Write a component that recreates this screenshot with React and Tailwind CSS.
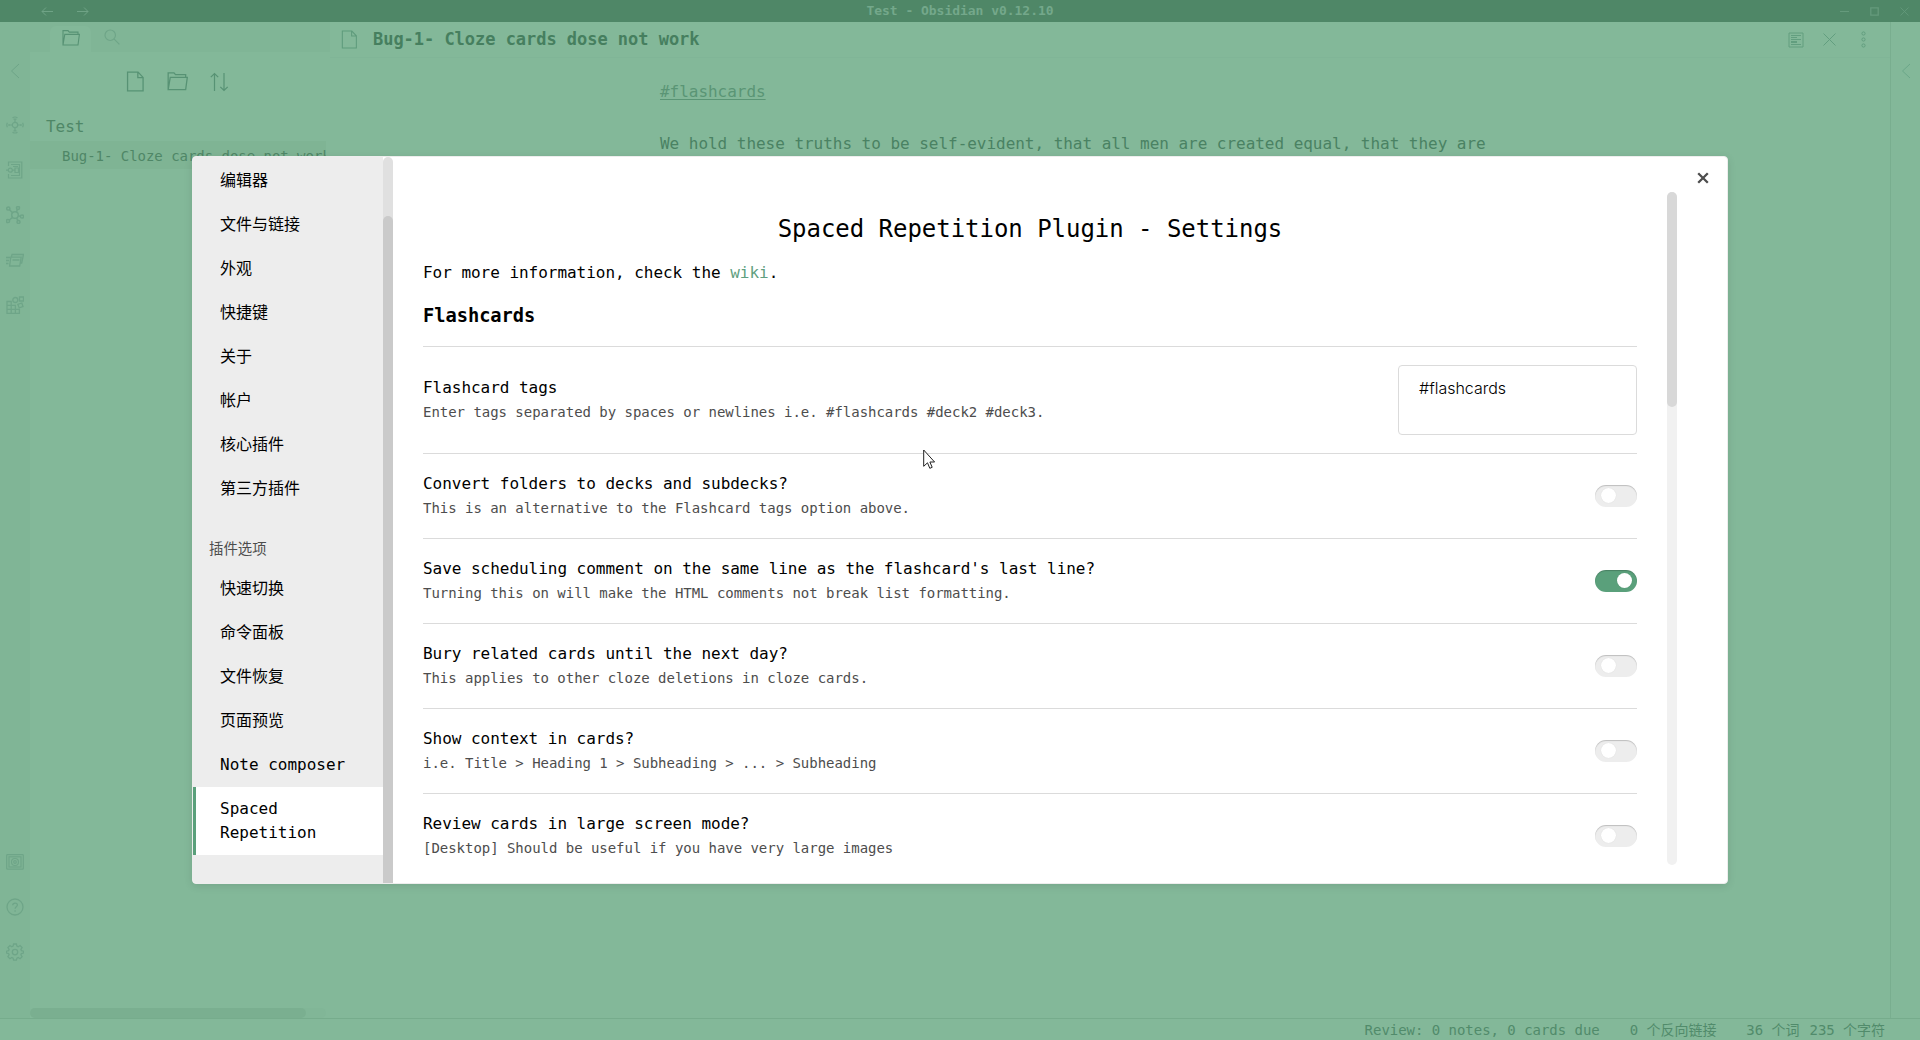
import React from "react";

const Svg = ({ size = 18, w = 1.5, className = "", children, box = "0 0 18 18" }) => (
  <svg
    width={size}
    height={size}
    viewBox={box}
    fill="none"
    stroke="currentColor"
    strokeWidth={w}
    className={"block shrink-0 " + className}
  >
    {children}
  </svg>
);

const ArrowLeft = () => (
  <Svg size={12} w={1} box="0 0 12 12"><path d="M12 6.500H1M5 2.500L1 6.500l4 4" /></Svg>
);
const ArrowRight = () => (
  <Svg size={12} w={1} box="0 0 12 12"><path d="M0 6.500h11M7 2.500l4 4-4 4" /></Svg>
);
const Chevron = () => (
  <Svg size={16} w={1} box="0 0 16 16"><path d="M12 1L4.500 8l7.500 7" /></Svg>
);
const Folder = ({ size = 18 }) => (
  <Svg size={size} w={1.1}>
    <path d="M1 16V1.600h5l1.300 1.500H16v2.300M1 16L2.800 5.400h14.600L16 16H1z" />
  </Svg>
);
const Doc = ({ size = 18, w = 1.1 }) => (
  <Svg size={size} w={w}>
    <path d="M2.200 1h9l4.300 4.500V17H2.200zM11 1v4.600h4.500" />
  </Svg>
);
const Search = () => (
  <Svg size={16} w={1.3} box="0 0 18 18"><circle cx="7" cy="7" r="5.900" /><path d="M11.200 11.200L17.300 17.300" /></Svg>
);
const Sort = () => (
  <Svg size={20} w={1.2} box="0 0 20 20">
    <path d="M5.500 19V1.500M1.800 5.200l3.700-3.700 3.700 3.700M15 1v17.500M11.300 14.800l3.700 3.700 3.700-3.700" />
  </Svg>
);
const Graph = () => (
  <Svg w={1.2}>
    <circle cx="9" cy="9" r="2.700" />
    <path d="M9 3v3M9 12v3M3.500 9h3M11.500 9h3M6.500 1.800q2.500-1.600 5 0M6.500 16.200q2.500 1.600 5 0M1.400 6.800q-1.200 2.200 0 4.400M16.600 6.800q1.200 2.200 0 4.400M7.500 3.200h3M7.500 14.800h3M3 8v2M15 8v2" />
  </Svg>
);
const Template = () => (
  <Svg w={1.2}>
    <path d="M2.500 5V1h13.300v16H2.500v-4M5 3.500h8.500v11H5" />
    <circle cx="4.300" cy="9.200" r="2" />
    <path d="M0 9.200h2M6.300 9.200H9M9 7h3.500v4.500H9zM7 5.500h5" />
  </Svg>
);
const Network = () => (
  <Svg>
    <circle cx="9" cy="9" r="3.300" />
    <circle cx="2.300" cy="2.500" r="1.600" /><circle cx="12" cy="1.900" r="1.500" />
    <circle cx="2" cy="15" r="1.600" /><circle cx="12.500" cy="15.900" r="1.500" />
    <circle cx="16" cy="10.500" r="1.600" />
    <path d="M3.500 3.700L6.600 6.700M11.400 3.400l-1 2.600M3.300 14L6.600 11.400M11.900 14.400L10.500 12M14.400 10.200L12.200 9.700" />
  </Svg>
);
const Cards = () => (
  <Svg w={1.3}>
    <path d="M4.800 6.200h10.400l-1.500 8.800H3.600zM5.300 6.200L6 3.500h11.500L15.700 12h-1.500M6.500 9h7M0 6.500h4M0 9.500h3M0 12.500h2.500" />
  </Svg>
);
const Blocks = () => (
  <Svg w={1.300}>
    <path d="M1 5.500h4.200v11.800H1zM5.200 9.300h4.200v8H5.200M9.400 13.300h4v4h-4M1 9.300h4.200M1 13.300h8.400M13.500 1h4v4h-4zM11.800 8.300l4-1.300 1.200 3.600-3.800 1.200z" />
    <circle cx="9.300" cy="4" r="2.500" />
  </Svg>
);
const Vault = () => (
  <Svg w={1.2}>
    <rect x=".7" y="1.600" width="16.600" height="14.600" rx=".8" />
    <rect x="3" y="3.800" width="12" height="10.200" />
    <circle cx="9" cy="9" r="3.500" /><circle cx="9" cy="9" r="1.300" />
  </Svg>
);
const Help = () => (
  <Svg w={1.3}>
    <circle cx="9" cy="9" r="8" />
    <path d="M6.700 7.300c0-3 4.800-2.900 4.700-.2 0 1.700-2.300 1.700-2.300 3.700M9.100 12.200v1.600" />
  </Svg>
);
const Gear = () => (
  <Svg w={1.300}>
    <path d="M7.600 1h2.800l.5 2.100 1.300.6 1.900-1.200 2 2-1.200 1.900.5 1.200 2.100.6v1.800l-2.100.6-.5 1.200 1.200 1.900-2 2-1.900-1.200-1.300.6-.5 2.100H7.600l-.5-2.100-1.300-.6-1.900 1.200-2-2 1.200-1.900-.5-1.200L.5 10V8.200l2.100-.6.5-1.200-1.200-1.900 2-2 1.900 1.200 1.300-.6z" />
    <circle cx="9" cy="9.100" r="2.700" />
  </Svg>
);
const Reading = () => (
  <Svg size={16} w={1} box="0 0 16 16">
    <path d="M1 1h14v14H1z" />
    <path d="M3 3.500h10M3 5.500h6M3 7.500h10M3 9.500h6M3 10.500h6M3 12.500h10" />
  </Svg>
);

const mainNav = ["编辑器", "文件与链接", "外观", "快捷键", "关于", "帐户", "核心插件", "第三方插件"];
const pluginNav = ["快速切换", "命令面板", "文件恢复", "页面预览", "Note composer"];

const settings = [
  ["Convert folders to decks and subdecks?", "This is an alternative to the Flashcard tags option above.", false],
  ["Save scheduling comment on the same line as the flashcard's last line?", "Turning this on will make the HTML comments not break list formatting.", true],
  ["Bury related cards until the next day?", "This applies to other cloze deletions in cloze cards.", false],
  ["Show context in cards?", "i.e. Title > Heading 1 > Subheading > ... > Subheading", false],
  ["Review cards in large screen mode?", "[Desktop] Should be useful if you have very large images", false],
];

const Toggle = ({ on }) => (
  <div
    className={
      "flex h-[22px] w-[42px] shrink-0 rounded-full pt-[3px] " +
      (on
        ? "justify-end bg-[#5aa07b] pr-[5px] shadow-[inset_0_1px_1px_rgba(0,0,0,0.2)]"
        : "bg-[#ededed] pl-1.5 shadow-[inset_0_1px_1px_rgba(0,0,0,0.2)]")
    }
  >
    <div className="h-[15px] w-[15px] rounded-full bg-white shadow-[0_0_1px_rgba(0,0,0,0.12)]" />
  </div>
);

const NavItem = ({ children }) => (
  <div className="h-11 pl-[27px] leading-[44px] whitespace-nowrap">{children}</div>
);

const SettingText = ({ name, desc }) => (
  <div className="whitespace-nowrap">
    <div className="h-6 leading-6">{name}</div>
    <div className="h-[25px] text-[14px] leading-[25px] text-[#4d4d4d]">{desc}</div>
  </div>
);

function Workspace() {
  return (
    <div className="flex h-[1040px] w-full flex-col bg-[#83b899]">
      <div className="flex h-[22px] shrink-0 items-center bg-[#4f8767] text-[#6fa386]">
        <div className="flex w-[300px] gap-6 pl-[41px]"><ArrowLeft /><ArrowRight /></div>
        <div className="flex-1 text-center text-[13px] leading-[24px] font-bold text-[#74a88b]">
          Test - Obsidian v0.12.10
        </div>
        <div className="flex w-[300px] items-center justify-end gap-[21px] pr-[11px] text-[#659a7c]">
          <Svg size={9} w={1} box="0 0 9 9"><path d="M0 4.500h9" /></Svg>
          <Svg size={9} w={1.300} box="0 0 9 9"><path d="M.8.800h7.400v7.400H.8z" /></Svg>
          <Svg size={9} w={0.8} box="0 0 9 9"><path d="M.5.500l8 8M8.500.500l-8 8" /></Svg>
        </div>
      </div>

      <div className="flex h-[996px] shrink-0">
        <div className="flex w-[30px] shrink-0 flex-col items-center bg-[#80b596] pt-[41px] text-[#6ea588]">
          <div className="h-[53px]"><Chevron /></div>
          <div className="flex flex-1 flex-col gap-[27px]">
            <Graph /><Template /><Network /><Cards /><Blocks />
          </div>
          <div className="flex flex-col gap-[27px] pb-[57px]">
            <Vault /><Help /><Gear />
          </div>
        </div>

        <div className="flex w-[300px] shrink-0 flex-col text-[#4f8767]">
          <div className="flex h-[30px] shrink-0 items-end bg-[#80b596] pl-5">
            <div className="flex h-[26px] w-[41px] items-center justify-center rounded-t-md bg-[#83b899] pb-[3px] text-[#579274]">
              <Folder />
            </div>
            <div className="pb-[7px] pl-[13px] text-[#6ea588]"><Search /></div>
          </div>
          <div className="flex h-[59px] items-center gap-[21px] pl-[95px] text-[#579274]">
            <Doc size={21} /><Folder size={21} /><Sort />
          </div>
          <div className="h-[30px] pl-4 leading-[31px]">Test</div>
          <div className="h-7 w-[296px] overflow-hidden bg-[#7fb494] pl-8 text-[14px] leading-[30px] whitespace-nowrap">
            Bug-1- Cloze cards dose not work
          </div>
          <div className="mt-auto h-2.5 w-[296px] rounded-full bg-[#81b697]">
            <div className="h-2.5 w-[276px] rounded-full bg-[#7aaf90]" />
          </div>
        </div>

        <div className="flex flex-1 flex-col text-[#4a8263]">
          <div className="flex h-9 shrink-0 items-center border-b border-[#80b597] pl-[10px]">
            <span className="text-[#5f9b7c]"><Doc size={19} w={1} /></span>
            <span className="pl-[14px] text-[17px] font-bold text-[#467f5f]">Bug-1- Cloze cards dose not work</span>
            <div className="ml-auto flex items-center gap-[19px] pr-[18px] text-[#629e7f]">
              <Reading />
              <Svg size={13} w={1} box="0 0 13 13"><path d="M.5.500l12 12M12.500.500l-12 12" /></Svg>
              <Svg size={17} w={1} box="0 0 17 17">
                <circle cx="8.500" cy="2.500" r="1.600" /><circle cx="8.500" cy="8.500" r="1.600" /><circle cx="8.500" cy="14.500" r="1.600" />
              </Svg>
            </div>
          </div>
          <div className="pt-[21px] pl-[330px] leading-[26px] whitespace-nowrap">
            <div className="text-[#5a9575] underline underline-offset-2">#flashcards</div>
            <div className="pt-[26px]">
              We hold these truths to be self-evident, that all men are created equal, that they are
            </div>
          </div>
        </div>

        <div className="flex w-[30px] shrink-0 justify-center border-l border-[#79ae8f] pt-[41px] text-[#6ba789]">
          <Chevron />
        </div>
      </div>

      <div className="flex h-[22px] shrink-0 justify-end border-t border-[#76ac8c] pr-[35px] text-[14px] leading-[22px] whitespace-nowrap text-[#518b6b]">
        <span>Review: 0 notes, 0 cards due</span>
        <span className="pl-[30px]">0 个反向链接</span>
        <span className="pl-[30px]">36 个词</span>
        <span className="pl-[10px]">235 个字符</span>
      </div>
    </div>
  );
}

function SettingsModal() {
  return (
    <div className="absolute top-[156px] left-[192px] flex h-[728px] w-[1536px] overflow-hidden rounded border border-[#ededed] bg-white text-black shadow-[0_2px_8px_rgba(0,0,0,0.1)]">
      <div className="w-[190px] shrink-0 bg-[#ededed] pt-0.5 tracking-normal">
        {mainNav.map((t) => <NavItem key={t}>{t}</NavItem>)}
        <div className="mt-6 h-8 pl-4 text-[14.4px] leading-7 text-[#4d4d4d]">插件选项</div>
        {pluginNav.map((t) => <NavItem key={t}>{t}</NavItem>)}
        <div className="h-[68px] border-l-[3px] border-[#5aa07b] bg-white pt-2.5 pl-6 leading-6">
          Spaced<br />Repetition
        </div>
      </div>
      <div className="w-2.5 shrink-0 rounded-t-full bg-[#e0e0e0] pt-[59px]">
        <div className="h-[667px] rounded-t-full bg-[#cacaca]" />
      </div>

      <div className="w-[1244px] shrink-0 pt-[51px] pl-[30px]">
        <div className="w-[1214px]">
          <h2 className="h-[42px] text-center text-[24px] leading-[42px]">Spaced Repetition Plugin - Settings</h2>
          <p className="mt-[11px] h-6 leading-6">
            For more information, check the <span className="text-[#5f9f80]">wiki</span>.
          </p>
          <h3 className="mt-[17px] h-[44px] text-[18.72px] leading-[28px] font-bold">Flashcards</h3>
          <div className="flex h-[107px] items-center justify-between border-t border-[#dbdbdb]">
            <SettingText name="Flashcard tags" desc="Enter tags separated by spaces or newlines i.e. #flashcards #deck2 #deck3." />
            <div className="h-[70px] w-[239px] rounded border border-[#dbdbdb] pt-[9px] pl-5 font-[Inter] leading-[26px] font-light tracking-normal">
              #flashcards
            </div>
          </div>
          {settings.map(([name, desc, on]) => (
            <div key={name} className="flex h-[85px] items-center justify-between border-t border-[#dbdbdb]">
              <SettingText name={name} desc={desc} />
              <Toggle on={on} />
            </div>
          ))}
        </div>
      </div>

      <div className="mt-[35px] ml-[30px] h-[673px] w-2.5 shrink-0 rounded-full bg-[#f1f1f1]">
        <div className="h-[215px] rounded-full bg-[#d8d8d8]" />
      </div>
      <div className="mt-[15px] ml-5 text-[#4d4d4d]">
        <Svg size={12} w={2.300} box="0 0 12 12"><path d="M1.200 1.200l9.600 9.600M10.800 1.200l-9.600 9.600" /></Svg>
      </div>
    </div>
  );
}

export default function App() {
  return (
    <div className="relative h-[1040px] w-[1920px] overflow-hidden font-['DejaVu_Sans_Mono','Noto_Sans_CJK_SC',monospace] text-[16px] tracking-[-0.002em]">
      <Workspace />
      <SettingsModal />
      <svg width="13" height="21" viewBox="0 0 13 21" className="absolute top-[449px] left-[923px]">
        <path d="M.7 1v16.300l3.800-3.500 2.300 5.500 2.400-1-2.300-5.300h4.700z" fill="#fff" stroke="#222" strokeWidth="1" />
      </svg>
    </div>
  );
}
